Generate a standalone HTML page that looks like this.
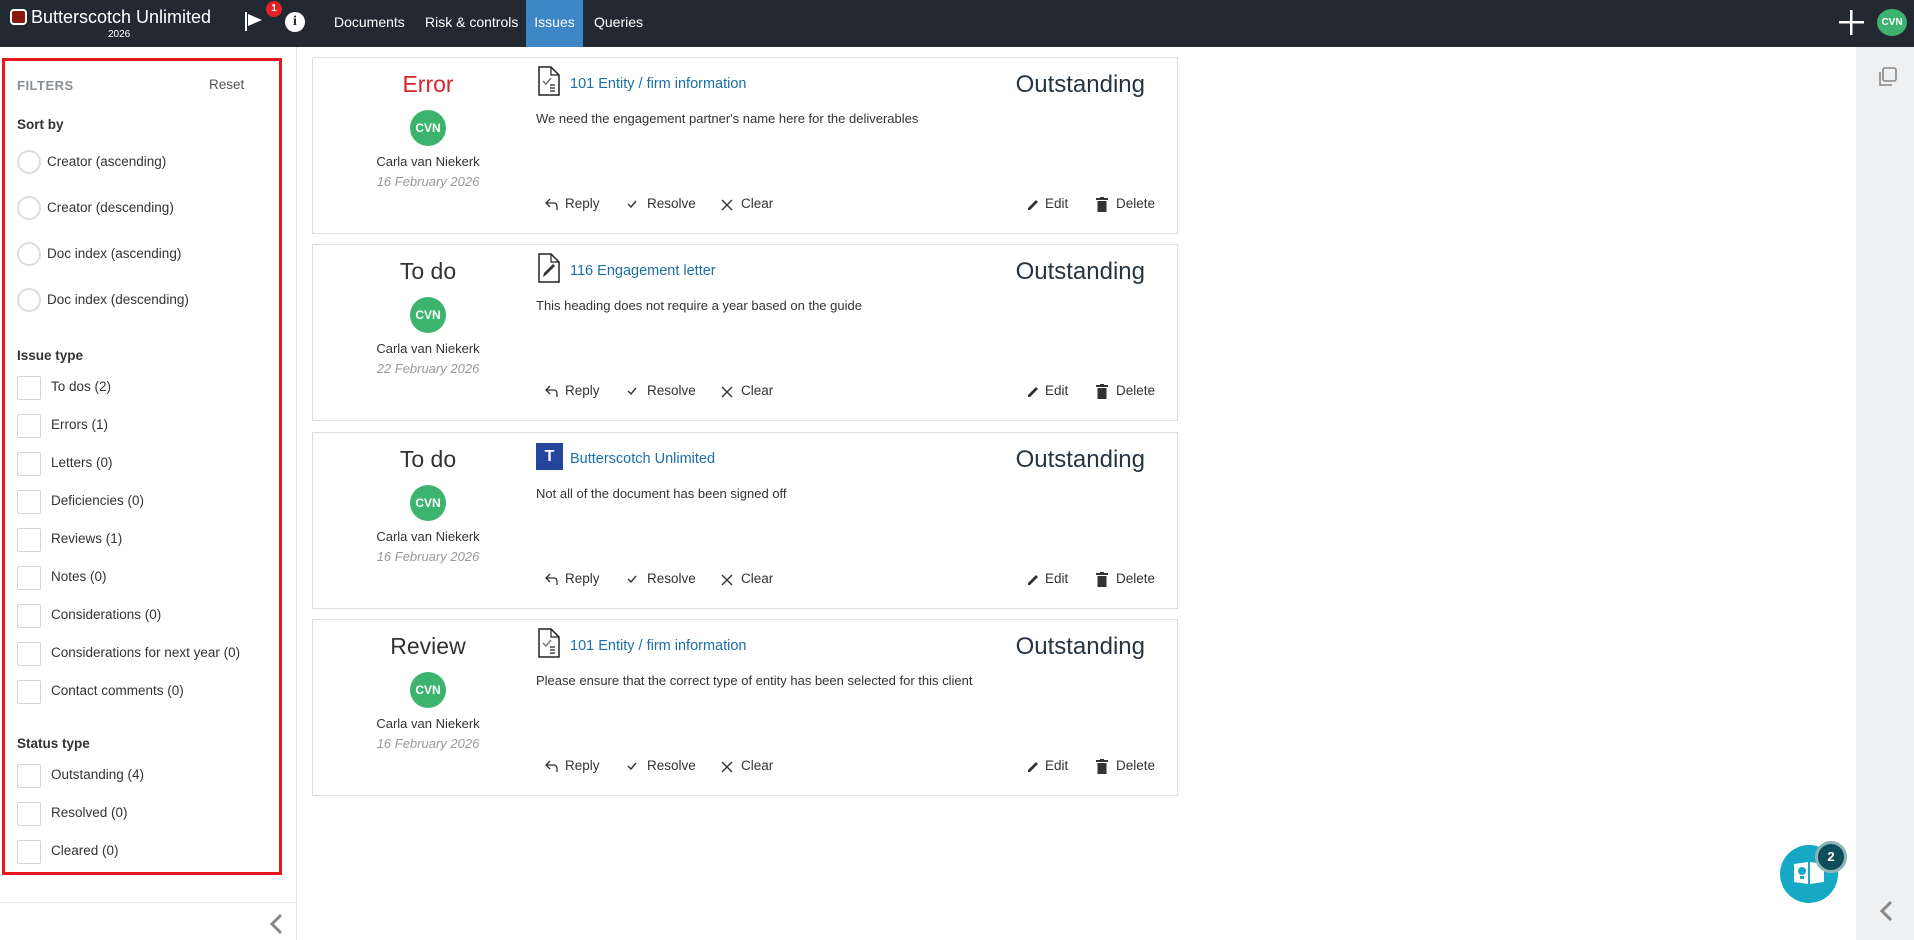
<!DOCTYPE html>
<html><head><meta charset="utf-8"><style>
*{box-sizing:border-box;margin:0;padding:0}
body{width:1914px;height:940px;overflow:hidden;background:#fff;font-family:"Liberation Sans",sans-serif;color:#333;position:relative}
.a{position:absolute;white-space:nowrap}
.hdr{position:absolute;left:0;top:0;width:1914px;height:47px;background:#222933}
.nav{position:absolute;top:0;height:47px;line-height:44px;color:#fff;font-size:14px}
.side{position:absolute;left:0;top:47px;width:297px;height:893px;border-right:1px solid #e3e4e6}
.red{position:absolute;left:2px;top:58px;width:280px;height:817px;border:3px solid #e8171f}
.rad{position:absolute;left:17px;width:24px;height:24px;border:2px solid #ddd;border-radius:50%}
.chk{position:absolute;left:17px;width:24px;height:24px;border:1px solid #d4d4d4;border-radius:2px}
.lbl{position:absolute;font-size:13.5px;color:#333;white-space:nowrap}
.hd{position:absolute;left:17px;font-size:13.5px;font-weight:bold;color:#333}
.card{position:absolute;left:312px;width:866px;height:177px;border:1px solid #ddd}
.st{position:absolute;width:200px;left:15px;text-align:center;font-size:23px;top:13px}
.av{position:absolute;left:97px;top:52px;width:36px;height:36px;border-radius:50%;background:#3db46d;color:#fff;font-size:12px;font-weight:bold;text-align:center;line-height:36px}
.nm{position:absolute;left:15px;width:200px;text-align:center;font-size:13px;top:96px}
.dt{position:absolute;left:15px;width:200px;text-align:center;font-size:13px;top:116px;color:#999;font-style:italic}
.ttl{position:absolute;left:257px;top:18px;font-size:14.5px;color:#1b6fa6;font-weight:500}
.ic{position:absolute;left:225px;top:8px}
.desc{position:absolute;left:223px;top:53px;font-size:13px;color:#333}
.out{position:absolute;right:32px;top:13px;font-size:24px;color:#263544}
.act{position:absolute;top:138px;font-size:13.5px;color:#333}
.act svg{position:absolute}
</style></head><body>
<div class="hdr"></div>
<div class="a" style="left:10px;top:9px;width:17px;height:16px;background:#8b1a0e;border:2px solid #fff;border-radius:4px"></div>
<div class="a" style="left:31px;top:7px;font-size:18px;color:#fff">Butterscotch Unlimited</div>
<div class="a" style="left:108px;top:29px;font-size:10px;color:#fff">2026</div>
<svg class="a" style="left:245px;top:12px" width="20" height="20"><rect x="0" y="0" width="2" height="19" fill="#fff"/><path d="M3 2 L17 8 L3 14Z" fill="#fff"/></svg>
<div class="a" style="left:266px;top:1px;width:16px;height:16px;border-radius:50%;background:#e02424;color:#fff;font-size:10px;font-weight:bold;text-align:center;line-height:16px">1</div>
<div class="a" style="left:285px;top:12px;width:20px;height:20px;border-radius:50%;background:#fff;color:#222933;font-size:14px;font-weight:bold;text-align:center;line-height:20px;font-family:'Liberation Serif',serif">i</div>
<div class="nav" style="left:334px">Documents</div>
<div class="nav" style="left:425px">Risk &amp; controls</div>
<div class="nav" style="left:526px;width:57px;background:#3d87c6;text-align:center">Issues</div>
<div class="nav" style="left:594px">Queries</div>
<svg class="a" style="left:1839px;top:10px" width="25" height="25"><rect x="11" y="0" width="2.5" height="25" fill="#fff"/><rect x="0" y="11" width="25" height="2.5" fill="#fff"/></svg>
<div class="a" style="left:1877px;top:9px;width:30px;height:27px;border-radius:50%;background:#3db46d;color:#fff;font-size:10px;font-weight:bold;text-align:center;line-height:27px">CVN</div>

<div class="side">
<div style="position:absolute;left:0;top:855px;width:296px;border-top:1px solid #e3e4e6"></div>
<svg style="position:absolute;left:268px;top:866px" width="16" height="22"><path d="M13 2 L4 11 L13 20" stroke="#888" stroke-width="3" fill="none"/></svg>
</div>
<div class="red"></div>
<div class="a" style="left:17px;top:78px;font-size:13px;font-weight:bold;color:#8a8f96;letter-spacing:.5px">FILTERS</div>
<div class="a" style="left:209px;top:77px;font-size:13.5px;color:#555">Reset</div>
<div class="hd" style="top:117px">Sort by</div>
<div class="rad" style="top:150px"></div><div class="lbl" style="left:47px;top:154px">Creator (ascending)</div>
<div class="rad" style="top:196px"></div><div class="lbl" style="left:47px;top:200px">Creator (descending)</div>
<div class="rad" style="top:242px"></div><div class="lbl" style="left:47px;top:246px">Doc index (ascending)</div>
<div class="rad" style="top:288px"></div><div class="lbl" style="left:47px;top:292px">Doc index (descending)</div>
<div class="hd" style="top:348px">Issue type</div>
<div class="chk" style="top:376px"></div><div class="lbl" style="left:51px;top:379px">To dos (2)</div>
<div class="chk" style="top:414px"></div><div class="lbl" style="left:51px;top:417px">Errors (1)</div>
<div class="chk" style="top:452px"></div><div class="lbl" style="left:51px;top:455px">Letters (0)</div>
<div class="chk" style="top:490px"></div><div class="lbl" style="left:51px;top:493px">Deficiencies (0)</div>
<div class="chk" style="top:528px"></div><div class="lbl" style="left:51px;top:531px">Reviews (1)</div>
<div class="chk" style="top:566px"></div><div class="lbl" style="left:51px;top:569px">Notes (0)</div>
<div class="chk" style="top:604px"></div><div class="lbl" style="left:51px;top:607px">Considerations (0)</div>
<div class="chk" style="top:642px"></div><div class="lbl" style="left:51px;top:645px">Considerations for next year (0)</div>
<div class="chk" style="top:680px"></div><div class="lbl" style="left:51px;top:683px">Contact comments (0)</div>
<div class="hd" style="top:736px">Status type</div>
<div class="chk" style="top:764px"></div><div class="lbl" style="left:51px;top:767px">Outstanding (4)</div>
<div class="chk" style="top:802px"></div><div class="lbl" style="left:51px;top:805px">Resolved (0)</div>
<div class="chk" style="top:840px"></div><div class="lbl" style="left:51px;top:843px">Cleared (0)</div>

<div class="a" style="left:1856px;top:47px;width:58px;height:893px;background:#eff0f2"></div>
<svg class="a" style="left:1878px;top:67px" width="20" height="20"><rect x="5" y="1" width="13" height="13" rx="2" stroke="#888" stroke-width="1.6" fill="none"/><path d="M2 5 V18 H14" stroke="#888" stroke-width="1.6" fill="none"/></svg>
<svg class="a" style="left:1878px;top:900px" width="16" height="22"><path d="M13 2 L4 11 L13 20" stroke="#888" stroke-width="3" fill="none"/></svg>
<div class="a" style="left:1780px;top:845px;width:58px;height:58px;border-radius:50%;background:#16a9c6"></div>
<svg class="a" style="left:1792px;top:860px" width="34" height="26"><path d="M2 4 L16 2 V24 L2 22Z M18 2 L32 4 V22 L18 24Z" fill="#fff"/><circle cx="10" cy="11" r="4" fill="#16a9c6"/><rect x="8" y="16" width="4" height="3" fill="#16a9c6"/></svg>
<div class="a" style="left:1815px;top:841px;width:32px;height:32px;border-radius:50%;background:#0e4e5b;border:3px solid #8fb3b8;color:#fff;font-size:13px;font-weight:bold;text-align:center;line-height:26px">2</div>

<div class="card" style="top:57px">
<div class="st" style="color:#d3262c">Error</div>
<div class="av">CVN</div><div class="nm">Carla van Niekerk</div><div class="dt">16 February 2026</div>
<svg class="ic" width="22" height="30"><path d="M1 1 H13 L21 9 V29 H1Z" fill="#fff" stroke="#222" stroke-width="1.5"/><path d="M13 1 V9 H21" fill="none" stroke="#222" stroke-width="1.2"/><path d="M5 15 L8 18 L13 12" stroke="#777" stroke-width="1.5" fill="none"/><path d="M12 19 H17 M12 22 H17 M12 25 H17" stroke="#222" stroke-width="1.3"/></svg>
<div class="ttl">101 Entity / firm information</div>
<div class="desc">We need the engagement partner's name here for the deliverables</div>
<div class="out">Outstanding</div>
<div class="act" style="left:232px"><svg style="left:0;top:2px" width="14" height="12"><path d="M5 1 L1 5 L5 9 M1 5 H9 Q12 5 12 9 V12" stroke="#333" stroke-width="1.3" fill="none"/></svg><span style="margin-left:20px">Reply</span></div>
<div class="act" style="left:314px"><svg style="left:0;top:4px" width="10" height="8"><path d="M1 4 L4 7 L9 1" stroke="#333" stroke-width="1.4" fill="none"/></svg><span style="margin-left:20px">Resolve</span></div>
<div class="act" style="left:408px"><svg style="left:0;top:3px" width="12" height="12"><path d="M1 1 L11 11 M11 1 L1 11" stroke="#333" stroke-width="1.4"/></svg><span style="margin-left:20px">Clear</span></div>
<div class="act" style="left:714px"><svg style="left:0;top:2px" width="12" height="13"><path d="M2 12 L1 12 L1 10 L9 2 L11 4 L3 12Z" fill="#333"/></svg><span style="margin-left:18px">Edit</span></div>
<div class="act" style="left:783px"><svg style="left:0;top:1px" width="12" height="15"><rect x="0" y="1" width="12" height="2" fill="#333"/><rect x="4" y="0" width="4" height="2" fill="#333"/><rect x="1.5" y="4" width="9" height="11" fill="#333"/></svg><span style="margin-left:20px">Delete</span></div>
</div>

<div class="card" style="top:244px">
<div class="st" style="color:#333">To do</div>
<div class="av">CVN</div><div class="nm">Carla van Niekerk</div><div class="dt">22 February 2026</div>
<svg class="ic" width="22" height="30"><path d="M1 1 H13 L21 9 V29 H1Z" fill="#fff" stroke="#222" stroke-width="1.5"/><path d="M13 1 V9 H21" fill="none" stroke="#222" stroke-width="1.2"/><path d="M5 24 L6 20 L15 11 L17 13 L8 22Z" fill="#333"/></svg>
<div class="ttl">116 Engagement letter</div>
<div class="desc">This heading does not require a year based on the guide</div>
<div class="out">Outstanding</div>
<div class="act" style="left:232px"><svg style="left:0;top:2px" width="14" height="12"><path d="M5 1 L1 5 L5 9 M1 5 H9 Q12 5 12 9 V12" stroke="#333" stroke-width="1.3" fill="none"/></svg><span style="margin-left:20px">Reply</span></div>
<div class="act" style="left:314px"><svg style="left:0;top:4px" width="10" height="8"><path d="M1 4 L4 7 L9 1" stroke="#333" stroke-width="1.4" fill="none"/></svg><span style="margin-left:20px">Resolve</span></div>
<div class="act" style="left:408px"><svg style="left:0;top:3px" width="12" height="12"><path d="M1 1 L11 11 M11 1 L1 11" stroke="#333" stroke-width="1.4"/></svg><span style="margin-left:20px">Clear</span></div>
<div class="act" style="left:714px"><svg style="left:0;top:2px" width="12" height="13"><path d="M2 12 L1 12 L1 10 L9 2 L11 4 L3 12Z" fill="#333"/></svg><span style="margin-left:18px">Edit</span></div>
<div class="act" style="left:783px"><svg style="left:0;top:1px" width="12" height="15"><rect x="0" y="1" width="12" height="2" fill="#333"/><rect x="4" y="0" width="4" height="2" fill="#333"/><rect x="1.5" y="4" width="9" height="11" fill="#333"/></svg><span style="margin-left:20px">Delete</span></div>
</div>

<div class="card" style="top:432px">
<div class="st" style="color:#333">To do</div>
<div class="av">CVN</div><div class="nm">Carla van Niekerk</div><div class="dt">16 February 2026</div>
<div class="ic" style="left:223px;top:10px;width:27px;height:27px;background:#24459a;color:#fff;font-weight:bold;font-size:16px;text-align:center;line-height:27px">T</div>
<div class="ttl">Butterscotch Unlimited</div>
<div class="desc">Not all of the document has been signed off</div>
<div class="out">Outstanding</div>
<div class="act" style="left:232px"><svg style="left:0;top:2px" width="14" height="12"><path d="M5 1 L1 5 L5 9 M1 5 H9 Q12 5 12 9 V12" stroke="#333" stroke-width="1.3" fill="none"/></svg><span style="margin-left:20px">Reply</span></div>
<div class="act" style="left:314px"><svg style="left:0;top:4px" width="10" height="8"><path d="M1 4 L4 7 L9 1" stroke="#333" stroke-width="1.4" fill="none"/></svg><span style="margin-left:20px">Resolve</span></div>
<div class="act" style="left:408px"><svg style="left:0;top:3px" width="12" height="12"><path d="M1 1 L11 11 M11 1 L1 11" stroke="#333" stroke-width="1.4"/></svg><span style="margin-left:20px">Clear</span></div>
<div class="act" style="left:714px"><svg style="left:0;top:2px" width="12" height="13"><path d="M2 12 L1 12 L1 10 L9 2 L11 4 L3 12Z" fill="#333"/></svg><span style="margin-left:18px">Edit</span></div>
<div class="act" style="left:783px"><svg style="left:0;top:1px" width="12" height="15"><rect x="0" y="1" width="12" height="2" fill="#333"/><rect x="4" y="0" width="4" height="2" fill="#333"/><rect x="1.5" y="4" width="9" height="11" fill="#333"/></svg><span style="margin-left:20px">Delete</span></div>
</div>

<div class="card" style="top:619px">
<div class="st" style="color:#333">Review</div>
<div class="av">CVN</div><div class="nm">Carla van Niekerk</div><div class="dt">16 February 2026</div>
<svg class="ic" width="22" height="30"><path d="M1 1 H13 L21 9 V29 H1Z" fill="#fff" stroke="#222" stroke-width="1.5"/><path d="M13 1 V9 H21" fill="none" stroke="#222" stroke-width="1.2"/><path d="M5 15 L8 18 L13 12" stroke="#777" stroke-width="1.5" fill="none"/><path d="M12 19 H17 M12 22 H17 M12 25 H17" stroke="#222" stroke-width="1.3"/></svg>
<div class="ttl">101 Entity / firm information</div>
<div class="desc">Please ensure that the correct type of entity has been selected for this client</div>
<div class="out">Outstanding</div>
<div class="act" style="left:232px"><svg style="left:0;top:2px" width="14" height="12"><path d="M5 1 L1 5 L5 9 M1 5 H9 Q12 5 12 9 V12" stroke="#333" stroke-width="1.3" fill="none"/></svg><span style="margin-left:20px">Reply</span></div>
<div class="act" style="left:314px"><svg style="left:0;top:4px" width="10" height="8"><path d="M1 4 L4 7 L9 1" stroke="#333" stroke-width="1.4" fill="none"/></svg><span style="margin-left:20px">Resolve</span></div>
<div class="act" style="left:408px"><svg style="left:0;top:3px" width="12" height="12"><path d="M1 1 L11 11 M11 1 L1 11" stroke="#333" stroke-width="1.4"/></svg><span style="margin-left:20px">Clear</span></div>
<div class="act" style="left:714px"><svg style="left:0;top:2px" width="12" height="13"><path d="M2 12 L1 12 L1 10 L9 2 L11 4 L3 12Z" fill="#333"/></svg><span style="margin-left:18px">Edit</span></div>
<div class="act" style="left:783px"><svg style="left:0;top:1px" width="12" height="15"><rect x="0" y="1" width="12" height="2" fill="#333"/><rect x="4" y="0" width="4" height="2" fill="#333"/><rect x="1.5" y="4" width="9" height="11" fill="#333"/></svg><span style="margin-left:20px">Delete</span></div>
</div>
</body></html>
